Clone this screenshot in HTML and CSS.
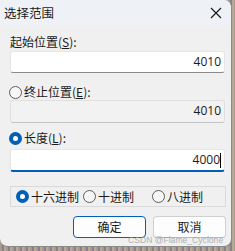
FILE: index.html
```html
<!DOCTYPE html>
<html>
<head>
<meta charset="utf-8">
<link rel="stylesheet" href="styles.css">
</head>
<body>
<div class="dialog">
  <div class="titlebar">
    <span class="title">选择范围</span>
    <svg class="close" width="12" height="12" viewBox="0 0 12 12"><path d="M1 1 L11 11 M11 1 L1 11" stroke="#1a1a1a" stroke-width="1.2" fill="none"/></svg>
  </div>
  <div class="content">
    <div class="label l1">起始位置(<u>S</u>):</div>
    <div class="field f1">4010</div>
    <div class="label radio-row l2"><span class="radio"></span>终止位置(<u>E</u>):</div>
    <div class="field disabled f2">4010</div>
    <div class="label radio-row l3"><span class="radio on"></span>长度(<u>L</u>):</div>
    <div class="field focus f3">4000<span class="caret"></span></div>
    <div class="group">
      <div class="opt o1"><span class="radio on"></span>十六进制</div>
      <div class="opt o2"><span class="radio"></span>十进制</div>
      <div class="opt o3"><span class="radio"></span>八进制</div>
    </div>
    <div class="buttons">
      <div class="btn default">确定</div>
      <div class="btn">取消</div>
    </div>
  </div>
  <div class="watermark">CSDN @Flame_Cyclone</div>
</div>
</body>
</html>
```
FILE: styles.css
```css
html, body {
  margin: 0;
  padding: 0;
  width: 235px;
  height: 251px;
  overflow: hidden;
  background: repeating-linear-gradient(90deg, #a89a8e 0 2px, #8c7f88 2px 4px, #b8a894 4px 6px);
}
.dialog {
  position: relative;
  width: 231px;
  height: 246px;
  background: #f0f0f0;
  border: 1px solid #8a8a8a;
  border-left: none;
  border-top: none;
  border-radius: 0 8px 8px 8px;
  overflow: hidden;
  font-family: "Noto Sans CJK SC", "Noto Sans", sans-serif;
  font-size: 12px;
  color: #1a1a1a;
}
.titlebar {
  height: 26px;
  background: #eef2f6;
  display: flex;
  align-items: center;
  justify-content: space-between;
  padding: 0 6px 0 4px;
}
.title {
  font-size: 12.5px;
  line-height: 16px;
}
.close {
  margin-right: 3px;
}
.content {
  padding: 8px 6px 0 10px;
  display: flex;
  flex-direction: column;
}
.label {
  height: 16px;
  line-height: 16px;
  display: flex;
  align-items: center;
}
.l1 { margin-bottom: 1px; }
.radio-row { margin-left: -1px; }
.l2 { margin-top: 11px; }
.l3 { margin-top: 7px; margin-bottom: 3px; }
.radio {
  box-sizing: border-box;
  width: 13px;
  height: 13px;
  border-radius: 50%;
  border: 1px solid #5c5c5c;
  background: #f6f6f6;
  margin-right: 2px;
  flex: none;
}
.radio.on {
  border: 4px solid #005fb8;
  background: #ffffff;
}
.field {
  box-sizing: border-box;
  height: 22px;
  width: 215px;
  background: #ffffff;
  border: 1px solid #e6e6e6;
  border-bottom: 1px solid #8a8a8a;
  border-radius: 3px;
  text-align: right;
  padding-right: 3px;
  font-family: "Open Sans", "Noto Sans", sans-serif;
  font-size: 12px;
  line-height: 20px;
  color: #1a1a1a;
}
.field.disabled {
  background: #f2f2f2;
  border-color: #e0e0e0;
  border-bottom-color: #c4c4c4;
  height: 23px;
}
.field.focus {
  border-bottom: 2px solid #005fb8;
  height: 23px;
  position: relative;
}
.caret {
  display: inline-block;
  width: 1px;
  height: 15px;
  background: #000;
  vertical-align: middle;
  margin-left: 0px;
}
.group {
  margin-top: 14px;
  box-sizing: border-box;
  width: 216px;
  height: 21px;
  border: 1px solid #dadada;
  display: flex;
  align-items: center;
  padding-left: 5px;
}
.opt {
  display: flex;
  align-items: center;
  line-height: 16px;
}
.o1 { width: 67px; }
.o2 { width: 69px; }
.buttons {
  margin-top: 9px;
  display: flex;
  justify-content: flex-end;
  gap: 7px;
  padding-right: 0px;
  width: 216px;
}
.btn {
  box-sizing: border-box;
  width: 73px;
  height: 22px;
  border: 1px solid #d0d0d0;
  border-bottom-color: #b8b8b8;
  border-radius: 4px;
  background: #fdfdfd;
  text-align: center;
  line-height: 20px;
  font-size: 12px;
}
.btn.default {
  border: 1px solid #005fb8;
}
.watermark {
  position: absolute;
  left: 128px;
  top: 235px;
  font-family: "Liberation Sans", sans-serif;
  font-size: 8.6px;
  line-height: 10px;
  color: rgba(150, 150, 150, 0.75);
  white-space: nowrap;
}
```
